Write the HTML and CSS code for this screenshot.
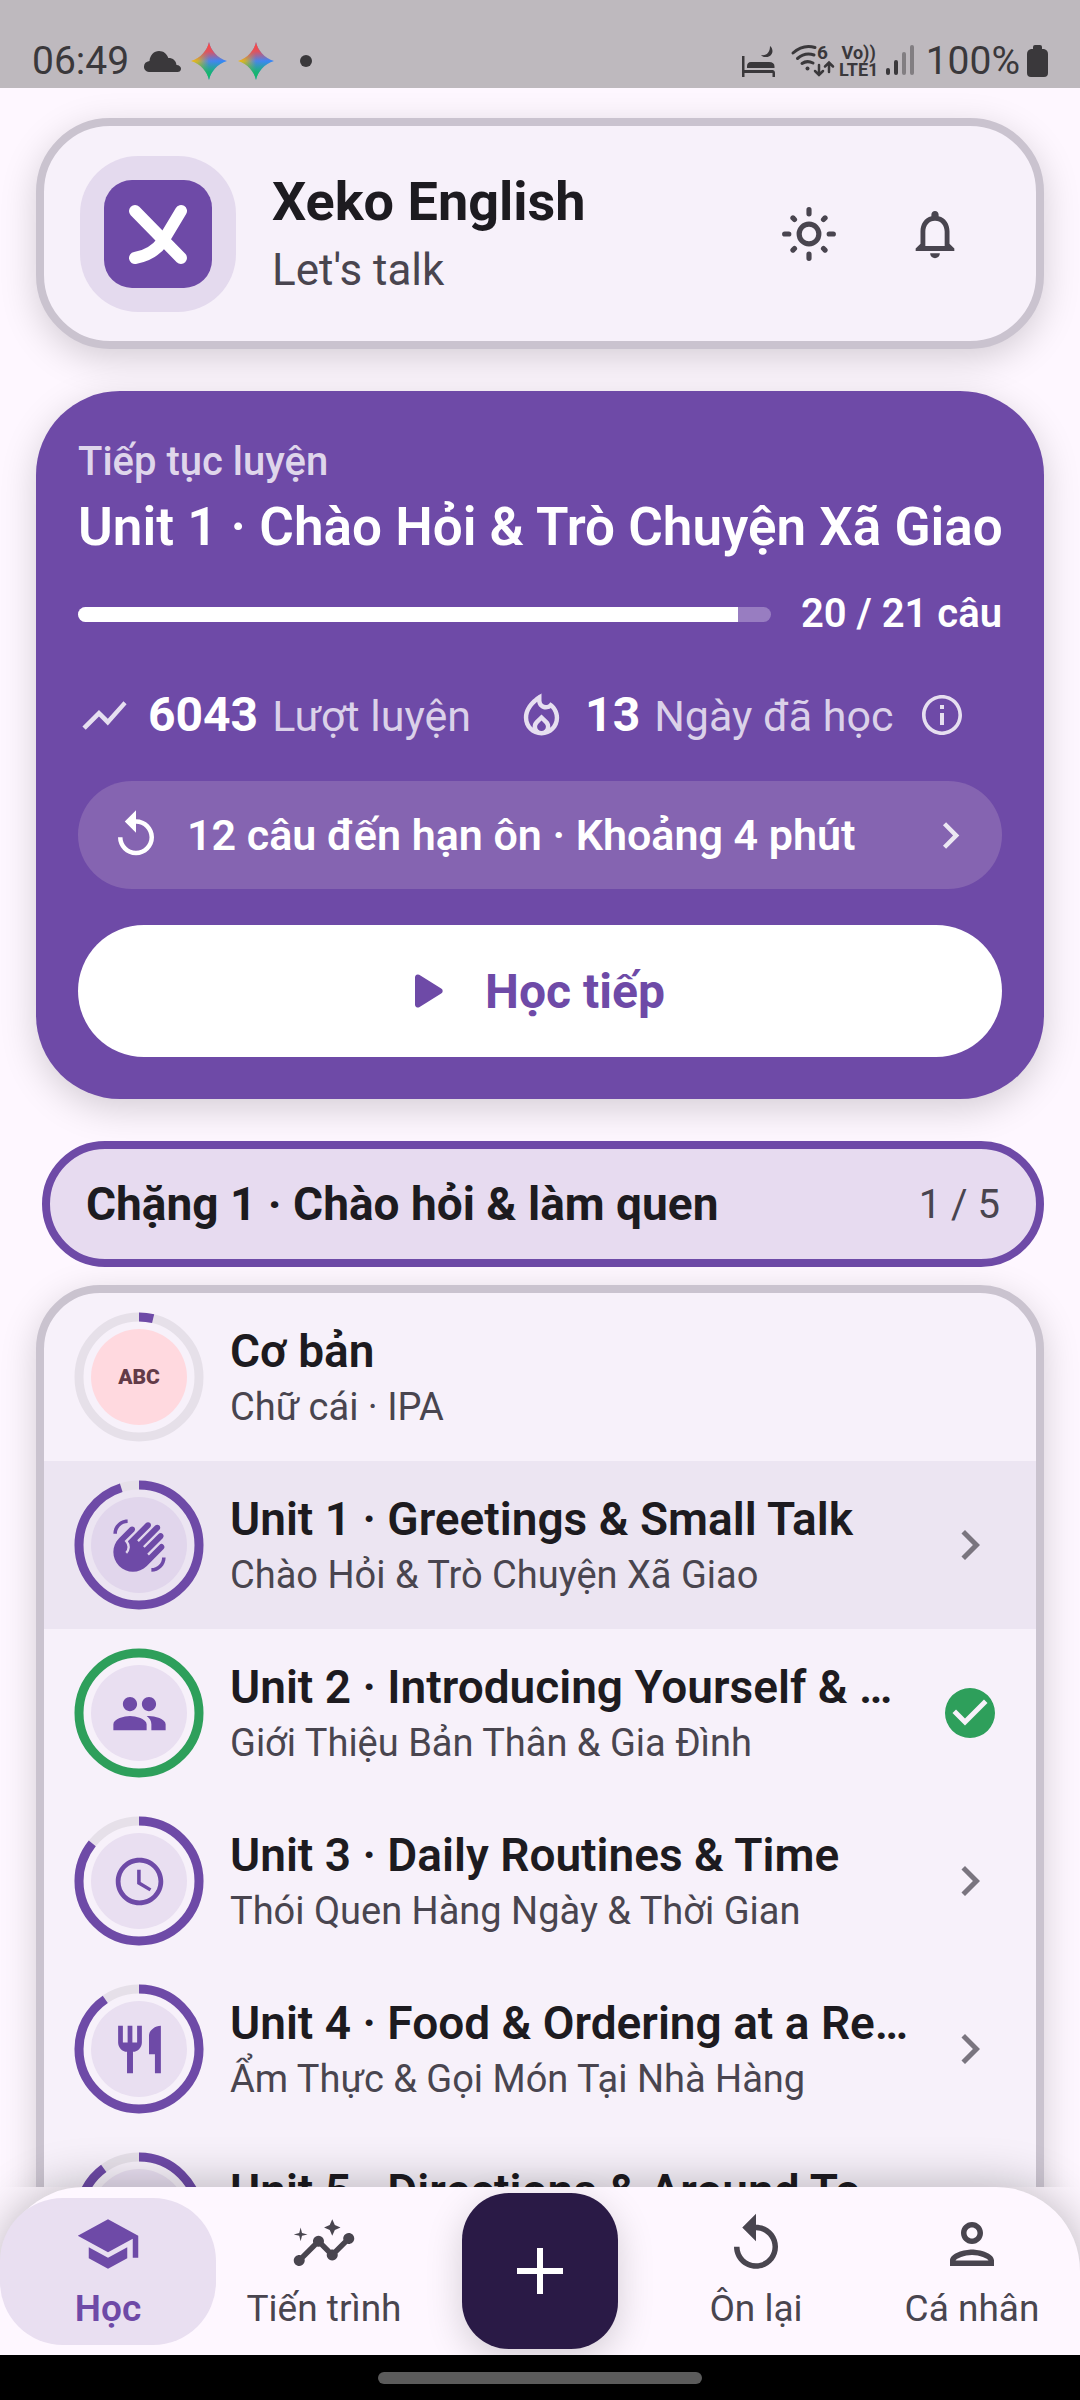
FILE: index.html
```html
<!DOCTYPE html>
<html lang="vi">
<head>
<meta charset="utf-8">
<meta name="viewport" content="width=device-width, initial-scale=1">
<title>Xeko English</title>
<link rel="stylesheet" href="styles.css">
</head>
<body>
<svg class="defs" aria-hidden="true">
  <defs>
    <linearGradient id="spark-base" x1="0" y1="0" x2="1" y2="0"><stop offset="0" stop-color="#fbbc04"/><stop offset=".2" stop-color="#c9b03a"/><stop offset=".5" stop-color="#4a86e8"/><stop offset="1" stop-color="#3186ff"/></linearGradient>
    <linearGradient id="spark-top" x1="0" y1="0" x2="0" y2="1"><stop offset=".08" stop-color="#ff4641"/><stop offset=".25" stop-color="#ff4641" stop-opacity=".8"/><stop offset=".5" stop-color="#ff4641" stop-opacity="0"/></linearGradient>
    <linearGradient id="spark-bottom" x1="0" y1="1" x2="0" y2="0"><stop offset=".05" stop-color="#0ebc5f"/><stop offset=".22" stop-color="#0ebc5f" stop-opacity=".8"/><stop offset=".5" stop-color="#0ebc5f" stop-opacity="0"/></linearGradient>
  </defs>
  <symbol id="spark" viewBox="0 0 36 38">
    <path fill="url(#spark-base)" d="M18 0c1.500 8 8.500 16.500 18 19-9.500 2.500-16.500 11-18 19C16.500 30 9.500 21.500 0 19 9.500 16.500 16.500 8 18 0z"/>
    <path fill="url(#spark-top)" d="M18 0c1.500 8 8.500 16.500 18 19-9.500 2.500-16.500 11-18 19C16.500 30 9.500 21.500 0 19 9.500 16.500 16.500 8 18 0z"/>
    <path fill="url(#spark-bottom)" d="M18 0c1.500 8 8.500 16.500 18 19-9.500 2.500-16.500 11-18 19C16.500 30 9.500 21.500 0 19 9.500 16.500 16.500 8 18 0z"/>
  </symbol>
  <symbol id="replay" viewBox="0 0 24 24"><path d="M12 5V1L7 6l5 5V7c3.310 0 6 2.690 6 6s-2.690 6-6 6-6-2.690-6-6H4c0 4.420 3.580 8 8 8s8-3.580 8-8-3.580-8-8-8z"/></symbol>
  <symbol id="chevron" viewBox="0 0 24 24"><path d="M10 6L8.590 7.410 13.170 12l-4.580 4.590L10 18l6-6z"/></symbol>
</svg>

<div class="app">
  <div class="status">
    <div class="status-left">
      <span class="clock">06:49</span>
      <svg class="s-cloud" viewBox="0 0 37 21"><path d="M5 21a5 5 0 0 1-5-5.500C0 12.500 2 10.500 5.500 10 6 4 10 0 15 0c4.500 0 8 2.800 9.300 7 5 0 7.700 2.700 8.200 7 2.700.2 4.500 1.600 4.500 3.700 0 2-1.500 3.300-3.500 3.300z"/></svg>
      <svg class="s-spark"><use href="#spark"/></svg>
      <svg class="s-spark"><use href="#spark"/></svg>
      <span class="dot"></span>
    </div>
    <div class="status-right">
      <svg class="s-bed" viewBox="0 0 34 32"><path d="M0 11h2.500v14H31a3 3 0 0 1 2 3v4h-2.500v-4H2.500v4H0zM5 23v-1.500Q5 17 9 17h18q5.500 0 5.500 4.500V23zM28 1c5 4 2 12-5 11-2 0-3-1-4-2 6 1 9-3 9-9z"/></svg>
      <svg class="s-wifi" viewBox="0 0 43 34"><g fill="none" stroke="currentColor" stroke-width="3" stroke-linecap="round"><path d="M2 9Q12 0 24 3.500"/><path d="M6.500 14.500Q14 8 23 11"/><path d="M11 19.500q5-3.500 11-.5"/><path d="M28 21v10M24 27l4 4 4-4M38 28V19M34 22.500l4-4 4 4" stroke-width="2.500"/></g><circle cx="16.500" cy="24.500" r="2"/><text x="26" y="15" font-size="19" font-weight="700">6</text></svg>
      <span class="volte"><span>Vo))</span><span>LTE1</span></span>
      <svg class="s-signal" viewBox="0 0 28 32"><rect x="0" y="23" width="4" height="7" rx="2"/><rect x="8" y="15" width="4" height="15" rx="2"/><g opacity=".45"><rect x="16" y="7" width="4" height="23" rx="2"/><rect x="24" y="0" width="4" height="30" rx="2"/></g></svg>
      <span class="battery-text">100%</span>
      <svg class="s-battery" viewBox="0 0 21 32"><path d="M6 4V2q0-2 2-2h5q2 0 2 2v2h2q4 1 4 5v19q0 4-4 4H4q-4 0-4-4V9q0-4 4-5z"/></svg>
    </div>
  </div>

  <main class="content">
    <header class="card header">
      <span class="logo"><svg viewBox="0 0 108 108"><g fill="none" stroke="#fff" stroke-width="12" stroke-linecap="round" stroke-linejoin="round"><path d="M31 31l46 47"/><path d="M77 31L59 61Q49 75 31 78"/></g></svg></span>
      <div class="brand">
        <h1>Xeko English</h1>
        <p>Let's talk</p>
      </div>
      <button class="icon-btn" type="button" aria-label="Giao diện"><svg viewBox="0 0 56 56"><g fill="none" stroke="currentColor" stroke-width="5" stroke-linecap="round"><circle cx="28" cy="28" r="9.500"/><path d="M28 4.500v4M28 47.500v4M4.500 28h4M47.500 28h4M12.500 12.500l1.500 1.500M42 42l1.500 1.500M12.500 43.500l1.500-1.500M42 14l1.500-1.500"/></g></svg></button>
      <button class="icon-btn" type="button" aria-label="Thông báo"><svg viewBox="0 0 24 24"><path d="M12 22c1.100 0 2-.9 2-2h-4c0 1.100.9 2 2 2zm6-6v-5c0-3.070-1.630-5.640-4.500-6.320V4c0-.83-.67-1.500-1.500-1.500s-1.500.67-1.500 1.500v.68C7.640 5.360 6 7.920 6 11v5l-2 2v1h16v-1l-2-2zm-2 1H8v-6c0-2.480 1.510-4.500 4-4.500s4 2.020 4 4.500v6z"/></svg></button>
    </header>

    <section class="hero">
      <p class="hero-label">Tiếp tục luyện</p>
      <h2>Unit 1 · Chào Hỏi &amp; Trò Chuyện Xã Giao</h2>
      <div class="progress-row">
        <div class="bar" role="progressbar" aria-label="Tiến độ" aria-valuenow="20" aria-valuemin="0" aria-valuemax="21"><div class="bar-fill" style="width:95.2%"></div></div>
        <span class="bar-text">20 / 21 câu</span>
      </div>
      <div class="stats">
        <div class="stat">
          <svg viewBox="0 0 24 24"><path d="M3.500 18.490l6-6.010 4 4L22 6.920l-1.410-1.410-7.090 7.970-4-4L2 16.990z"/></svg>
          <p><strong>6043</strong><span>Lượt luyện</span></p>
        </div>
        <div class="stat">
          <svg viewBox="0 0 24 24"><path d="M16 6l-.44.550c-.42.520-.98.750-1.540.750C13 7.300 12 6.520 12 5.300V2S4 6 4 13c0 4.420 3.580 8 8 8s8-3.580 8-8c0-2.960-1.610-5.620-4-7zm-4 13c-1.100 0-2-.87-2-1.940 0-.51.200-.99.580-1.360l1.420-1.400 1.430 1.400c.37.360.57.850.57 1.360 0 1.070-.9 1.940-2 1.940zm3.960-1.500c.04-.36.220-1.890-1.130-3.220L12 11.500l-2.830 2.780C7.810 15.620 8 17.160 8.040 17.500 6.790 16.400 6 14.790 6 13c0-3.160 2.130-5.650 4.030-7.250.23 1.990 1.930 3.550 3.990 3.550.78 0 1.540-.23 2.180-.66C17.340 9.780 18 11.350 18 13c0 1.790-.79 3.400-2.040 4.500z"/></svg>
          <p><strong>13</strong><span>Ngày đã học</span></p>
          <button class="info" type="button" aria-label="Thông tin"><svg viewBox="0 0 24 24"><path d="M11 7h2v2h-2zm0 4h2v6h-2zm1-9C6.480 2 2 6.480 2 12s4.480 10 10 10 10-4.480 10-10S17.520 2 12 2zm0 18.200c-4.520 0-8.200-3.680-8.200-8.200S7.480 3.800 12 3.800s8.200 3.680 8.200 8.200-3.680 8.200-8.200 8.200z"/></svg></button>
        </div>
      </div>
      <button class="review" type="button">
        <svg class="review-icon"><use href="#replay"/></svg>
        <span>12 câu đến hạn ôn · Khoảng 4 phút</span>
        <svg class="review-go"><use href="#chevron"/></svg>
      </button>
      <button class="continue" type="button">
        <svg viewBox="0 0 28 34"><path d="M4.200.8A2.800 2.800 0 0 0 0 3v28a2.800 2.800 0 0 0 4.200 2.200l22-13.600a3 3 0 0 0 0-5.200z"/></svg>
        <span>Học tiếp</span>
      </button>
    </section>

    <button class="stage" type="button"><strong>Chặng 1 · Chào hỏi &amp; làm quen</strong><span>1 / 5</span></button>

    <ul class="card units">
      <li><a class="unit basic" href="#basic">
        <span class="badge"><svg class="ring" viewBox="0 0 130 130"><circle class="track" cx="65" cy="65" r="60"/><circle class="done" cx="65" cy="65" r="60" pathLength="100" stroke-dasharray="3.800 100"/></svg><span class="disc abc">ABC</span></span>
        <span class="names"><span class="name">Cơ bản</span><span class="sub">Chữ cái · IPA</span></span>
      </a></li>
      <li><a class="unit current" href="#unit-1">
        <span class="badge"><svg class="ring" viewBox="0 0 130 130"><circle class="track" cx="65" cy="65" r="60"/><circle class="done" cx="65" cy="65" r="60" pathLength="100" stroke-dasharray="95.200 100"/></svg><span class="disc"><svg viewBox="0 0 24 24"><path d="M23 17c0 3.310-2.690 6-6 6v-1.500c2.480 0 4.500-2.020 4.500-4.500H23zM1 7c0-3.310 2.690-6 6-6v1.500C4.520 2.500 2.500 4.520 2.500 7H1zm7.010-2.680-4.600 4.600c-3.220 3.220-3.220 8.450 0 11.670s8.450 3.220 11.670 0l7.070-7.070c.49-.49.490-1.280 0-1.770a1.250 1.250 0 0 0-1.770 0l-4.420 4.420-.71-.71 6.540-6.540c.49-.49.490-1.280 0-1.770s-1.280-.49-1.770 0l-5.830 5.830-.71-.71 6.890-6.890c.49-.49.490-1.280 0-1.770s-1.280-.49-1.770 0l-6.890 6.890-.7-.7 5.480-5.480c.49-.49.490-1.280 0-1.770s-1.280-.49-1.770 0l-7.620 7.620a4.003 4.003 0 0 1-.33 5.280l-.71-.71a3 3 0 0 0 0-4.240l-.35-.35 4.070-4.070c.49-.49.490-1.280 0-1.770-.5-.48-1.290-.48-1.770.010z"/></svg></span></span>
        <span class="names"><span class="name">Unit 1 · Greetings &amp; Small Talk</span><span class="sub">Chào Hỏi &amp; Trò Chuyện Xã Giao</span></span>
        <svg class="go"><use href="#chevron"/></svg>
      </a></li>
      <li><a class="unit complete" href="#unit-2">
        <span class="badge"><svg class="ring" viewBox="0 0 130 130"><circle class="done" cx="65" cy="65" r="60"/></svg><span class="disc"><svg viewBox="0 0 24 24"><path d="M16 11c1.660 0 2.990-1.340 2.990-3S17.660 5 16 5s-3 1.340-3 3 1.340 3 3 3zm-8 0c1.660 0 2.990-1.340 2.990-3S9.660 5 8 5 5 6.340 5 8s1.340 3 3 3zm0 2c-2.330 0-7 1.170-7 3.500V19h14v-2.500c0-2.330-4.670-3.500-7-3.500zm8 0c-.29 0-.62.020-.97.050 1.160.84 1.970 1.970 1.970 3.450V19h6v-2.500c0-2.330-4.670-3.500-7-3.500z"/></svg></span></span>
        <span class="names"><span class="name">Unit 2 · Introducing Yourself &amp; …</span><span class="sub">Giới Thiệu Bản Thân &amp; Gia Đình</span></span>
        <svg class="go" viewBox="0 0 24 24"><path d="M12 2a10 10 0 1 0 0 20 10 10 0 0 0 0-20zm-2 15l-5-5 1.410-1.410L10 14.170l7.590-7.590L19 8l-9 9z"/></svg>
      </a></li>
      <li><a class="unit" href="#unit-3">
        <span class="badge"><svg class="ring" viewBox="0 0 130 130"><circle class="track" cx="65" cy="65" r="60"/><circle class="done" cx="65" cy="65" r="60" pathLength="100" stroke-dasharray="85.800 100"/></svg><span class="disc"><svg viewBox="0 0 24 24"><path d="M11.990 2C6.470 2 2 6.480 2 12s4.470 10 9.990 10C17.520 22 22 17.520 22 12S17.520 2 11.990 2zM12 20c-4.420 0-8-3.580-8-8s3.580-8 8-8 8 3.580 8 8-3.580 8-8 8zm.5-13H11v6l5.250 3.150.75-1.230-4.500-2.670z"/></svg></span></span>
        <span class="names"><span class="name">Unit 3 · Daily Routines &amp; Time</span><span class="sub">Thói Quen Hàng Ngày &amp; Thời Gian</span></span>
        <svg class="go"><use href="#chevron"/></svg>
      </a></li>
      <li><a class="unit" href="#unit-4">
        <span class="badge"><svg class="ring" viewBox="0 0 130 130"><circle class="track" cx="65" cy="65" r="60"/><circle class="done" cx="65" cy="65" r="60" pathLength="100" stroke-dasharray="90.500 100"/></svg><span class="disc"><svg viewBox="0 0 24 24"><path d="M11 9H9V2H7v7H5V2H3v7c0 2.120 1.660 3.840 3.750 3.970V22h2.500v-9.030C11.340 12.840 13 11.120 13 9V2h-2v7zm5-3v8h2.500v8H21V2c-2.760 0-5 2.240-5 4z"/></svg></span></span>
        <span class="names"><span class="name">Unit 4 · Food &amp; Ordering at a Re…</span><span class="sub">Ẩm Thực &amp; Gọi Món Tại Nhà Hàng</span></span>
        <svg class="go"><use href="#chevron"/></svg>
      </a></li>
      <li><a class="unit" href="#unit-5">
        <span class="badge"><svg class="ring" viewBox="0 0 130 130"><circle class="track" cx="65" cy="65" r="60"/><circle class="done" cx="65" cy="65" r="60" pathLength="100" stroke-dasharray="90 100"/></svg><span class="disc"></span></span>
        <span class="names"><span class="name">Unit 5 · Directions &amp; Around To…</span><span class="sub">&nbsp;</span></span>
        <svg class="go"><use href="#chevron"/></svg>
      </a></li>
    </ul>
  </main>

  <div class="dock">
    <nav class="tabs">
      <a class="tab active" href="#learn" aria-current="page"><svg viewBox="0 0 24 24"><path d="M5 13.180v4L12 21l7-3.820v-4L12 17l-7-3.820zM12 3L1 9l11 6 9-4.910V17h2V9L12 3z"/></svg><span>Học</span></a>
      <a class="tab" href="#progress"><svg viewBox="0 0 24 24"><path d="M21 8c-1.450 0-2.260 1.440-1.930 2.510l-3.550 3.560c-.3-.09-.74-.09-1.040 0l-2.550-2.550C12.270 10.450 11.460 9 10 9c-1.450 0-2.270 1.440-1.930 2.520l-4.560 4.550C2.440 15.740 1 16.550 1 18c0 1.100.9 2 2 2 1.450 0 2.260-1.440 1.930-2.510l4.550-4.560c.3.090.74.090 1.040 0l2.550 2.550C12.730 16.550 13.540 18 15 18c1.450 0 2.270-1.440 1.930-2.520l3.560-3.550c1.070.33 2.510-.48 2.510-1.930 0-1.100-.9-2-2-2z"/><path d="M15 9l.94-2.070L18 6l-2.060-.93L15 3l-.92 2.070L12 6l2.080.930zM3.500 11L4 9l2-.5L4 8l-.5-2L3 8l-2 .5L3 9z"/></svg><span>Tiến trình</span></a>
      <button class="add" type="button" aria-label="Thêm"><svg viewBox="0 0 46 46"><path d="M20 0h6v20h20v6H26v20h-6V26H0v-6h20z"/></svg></button>
      <a class="tab" href="#review"><svg><use href="#replay"/></svg><span>Ôn lại</span></a>
      <a class="tab" href="#me"><svg viewBox="0 0 24 24"><path d="M12 6c1.100 0 2 .9 2 2s-.9 2-2 2-2-.9-2-2 .9-2 2-2m0 10c2.700 0 5.800 1.290 6 2H6c.23-.72 3.310-2 6-2m0-12C9.790 4 8 5.790 8 8s1.790 4 4 4 4-1.790 4-4-1.790-4-4-4zm0 10c-2.670 0-8 1.340-8 4v2h16v-2c0-2.660-5.330-4-8-4z"/></svg><span>Cá nhân</span></a>
    </nav>
  </div>
  <div class="home-bar"><span></span></div>
</div>
</body>
</html>
```
FILE: styles.css
```css
:root {
  --page: #fef7ff;
  --surface: #f7f1fa;
  --outline: #cac3cf;
  --primary: #6e4aa7;
  --lilac: #e9dff1;
  --ink: #1d1b20;
  --muted: #49454f;
  --shadow: 0 10px 36px rgba(0, 0, 0, .17);
}
* { box-sizing: border-box; }
body, h1, h2, p, ul { margin: 0; padding: 0; }
body { font-family: Roboto, "Noto Sans", sans-serif; color: var(--ink); background: var(--page); }
button { border: 0; padding: 0; background: none; font: inherit; color: inherit; cursor: pointer; }
a { color: inherit; text-decoration: none; }
ul { list-style: none; }
svg { display: block; flex: none; fill: currentColor; }
.defs { position: absolute; width: 0; height: 0; }

.app { display: flex; flex-direction: column; height: 100vh; }

/* System status bar */
.status { position: relative; z-index: 1; display: flex; justify-content: space-between; align-items: center; height: 88px; padding: 34px 32px 0; background: #beb9be; color: #3a383b; flex: none; }
.status-left, .status-right { display: flex; align-items: center; }
.clock, .battery-text { font-size: 39px; line-height: 44px; }
.s-cloud { width: 37px; height: 21px; margin: 0 10px 0 15px; }
.s-spark { width: 36px; height: 38px; margin-right: 11px; }
.dot { width: 12px; height: 12px; margin-left: 15px; border-radius: 50%; background: currentColor; }
.s-bed { width: 34px; height: 32px; }
.s-wifi { width: 43px; height: 34px; margin-left: 15px; overflow: visible; }
.volte { display: flex; flex-direction: column; align-items: center; width: 40px; margin: 0 7px 0 5px; font-size: 18px; line-height: 17px; font-weight: 700; }
.s-signal { width: 28px; height: 32px; }
.battery-text { margin: 0 7px 0 12px; }
.s-battery { width: 21px; height: 32px; }

.content { flex: 1; min-height: 0; overflow: auto; scrollbar-width: none; padding: 30px 36px; }
.card { background: var(--surface); border: 8px solid var(--outline); box-shadow: var(--shadow); }

/* Brand header */
.header { display: flex; align-items: center; margin-bottom: 42px; padding: 30px 38px 29px 36px; border-radius: 74px; }
.logo { display: grid; place-items: center; width: 156px; height: 156px; border-radius: 58px; background: #e4daee; flex: none; }
.logo svg { width: 108px; height: 108px; border-radius: 28px; background: var(--primary); }
.brand { flex: 1; padding-left: 36px; }
.brand h1 { font-size: 54px; line-height: 72px; font-weight: 700; }
.brand p { font-size: 44px; line-height: 64px; color: var(--muted); }
.icon-btn { display: grid; place-items: center; width: 126px; height: 126px; color: var(--muted); }
.icon-btn svg { width: 58px; height: 58px; }

/* Continue-learning card */
.hero { display: flex; flex-direction: column; margin-bottom: 42px; padding: 42px; border-radius: 84px; background: var(--primary); color: #fff; box-shadow: var(--shadow); }
.hero-label { font-size: 40px; line-height: 58px; font-weight: 500; color: #dfd6eb; }
.hero h2 { font-size: 53px; line-height: 72px; font-weight: 600; white-space: nowrap; }
.progress-row { display: flex; align-items: center; gap: 30px; margin-top: 26px; }
.bar { flex: 1; height: 15px; border-radius: 8px; overflow: hidden; background: #987dc1; }
.bar-fill { height: 100%; background: #fff; }
.bar-text { font-size: 40px; line-height: 50px; font-weight: 600; }
.stats { display: flex; gap: 44px; margin: 46px 0 36px; }
.stat { display: flex; align-items: center; height: 60px; color: #e6dff0; }
.stat svg { width: 53px; height: 53px; margin-right: 17px; }
.stat p { display: flex; align-items: baseline; gap: 14px; line-height: 60px; }
.stat strong { font-size: 48px; font-weight: 700; color: #fff; }
.stat p span { font-size: 43px; color: #dbd1e9; }
.info { margin-left: 24px; }
.info svg { width: 48px; height: 48px; margin: 0; }
.review { display: flex; align-items: center; height: 108px; padding: 0 25px 0 31px; border-radius: 54px; background: #8564b1; text-align: left; }
.review-icon { width: 54px; height: 54px; margin-right: 24px; }
.review span { flex: 1; font-size: 43px; font-weight: 600; }
.review-go { width: 53px; height: 53px; opacity: .85; }
.continue { display: flex; align-items: center; justify-content: center; gap: 42px; height: 132px; margin-top: 36px; border-radius: 66px; background: #fff; color: var(--primary); font-size: 48px; font-weight: 700; }
.continue svg { width: 28px; height: 34px; }

/* Stage heading */
.stage { display: flex; align-items: center; justify-content: space-between; width: calc(100% - 6px); height: 126px; margin: 0 0 18px 6px; padding: 0 36px; border: 8px solid var(--primary); border-radius: 63px; background: #e7dbf0; }
.stage strong { font-size: 46px; font-weight: 700; }
.stage span { font-size: 40px; color: var(--muted); }

/* Unit list */
.units { overflow: hidden; border-radius: 64px; }
.unit { display: flex; align-items: center; height: 168px; padding: 0 36px 0 30px; }
.current { background: #ece5f2; }
.badge { display: grid; place-items: center; flex: none; margin-right: 26px; color: var(--primary); }
.badge > * { grid-area: 1 / 1; }
.ring { width: 130px; height: 130px; fill: none; stroke-width: 9; }
.track { stroke: #e6e0e9; }
.done { stroke: var(--primary); transform: rotate(-90deg); transform-origin: center; }
.complete .done { stroke: #2e9f5b; }
.disc { display: grid; place-items: center; width: 96px; height: 96px; border-radius: 50%; background: var(--lilac); }
.disc svg { width: 57px; height: 57px; }
.current .disc { background: #e1d6ec; }
.abc { background: #ffd9df; color: #633b48; font-size: 21px; font-weight: 900; }
.names { flex: 1; min-width: 0; }
.name, .sub { display: block; white-space: nowrap; overflow: hidden; text-overflow: ellipsis; }
.name { font-size: 46px; line-height: 60px; font-weight: 600; }
.sub { font-size: 38px; line-height: 52px; color: var(--muted); }
.go { width: 60px; height: 60px; margin-left: 20px; color: #7a757f; }
.complete .go { color: #2e9f5b; }

/* Bottom navigation */
.dock { position: relative; flex: none; background: var(--page); }
.tabs { display: grid; grid-template-columns: repeat(5, 1fr); align-items: center; justify-items: center; height: 168px; border-radius: 84px 84px 0 0; background: var(--page); box-shadow: 0 0 48px rgba(0, 0, 0, .28); }
.tab { display: flex; flex-direction: column; align-items: center; gap: 10px; width: 100%; padding: 13px 0 14px; color: var(--muted); font-size: 37px; line-height: 44px; }
.tab svg { width: 66px; height: 66px; }
.active { border-radius: 63px; background: var(--lilac); color: var(--primary); font-weight: 600; }
.add { display: grid; place-items: center; width: 156px; height: 156px; border-radius: 47px; background: #2a1a46; color: #fff; box-shadow: var(--shadow); }
.add svg { width: 46px; height: 46px; }

.home-bar { position: relative; display: grid; place-items: center; height: 45px; flex: none; background: #000; }
.home-bar span { width: 30%; height: 12px; border-radius: 6px; background: #5b5b5b; }
```
